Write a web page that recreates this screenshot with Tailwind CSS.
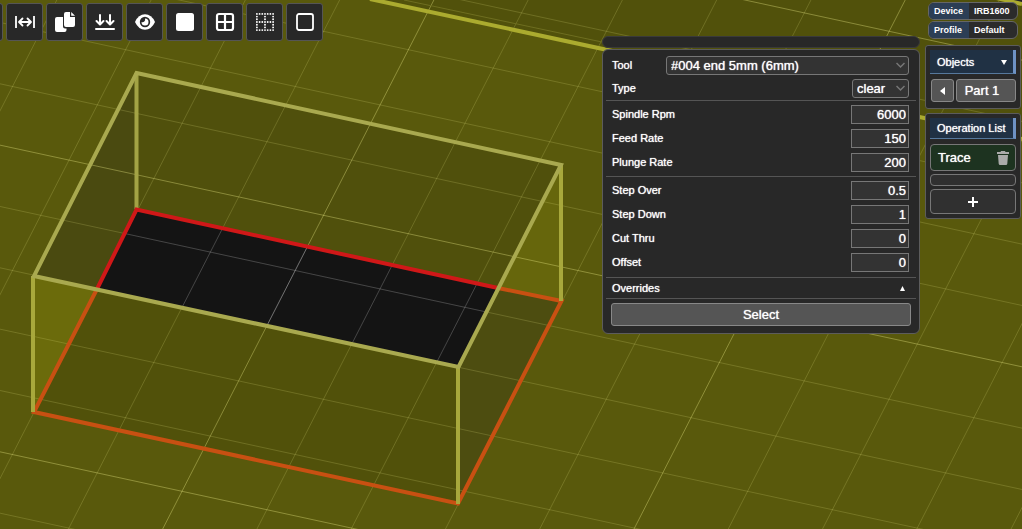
<!DOCTYPE html>
<html lang="en">
<head>
  <meta charset="UTF-8">
  <meta name="viewport" content="width=device-width, initial-scale=1.0">
  <title>Workspace</title>
  <script src="https://cdn.jsdelivr.net/npm/@tailwindcss/browser@4"></script>
</head>
<body class="bg-[#59590c] text-white font-['Liberation_Sans',Arial,sans-serif] text-[13px] overflow-hidden">
  <div class="relative min-h-screen overflow-hidden">

    <!-- 3D view -->
    <svg class="absolute inset-0 w-full h-full" viewBox="0 0 1022 529" preserveAspectRatio="xMinYMin slice" fill="none">
      <defs>
        <clipPath id="floor"><path d="M136.500 209.500 498 288 458.500 367 97 289Z" /></clipPath>
        <g id="grid"></g>
      </defs>
      <path d="M370 0H1022V140Z" fill="#51510b" />
      <path d="M998 -2H1022V3Z" fill="#222" />
      <path d="M136.500 73 561 165 498 288 136.500 209.500Z" fill="#50500c" />
      <path d="M136.500 73V209.500L97 289 34 276Z" fill="#4a4a10" />
      <path d="M561 165V301L498 288Z" fill="#66660c" />
      <path d="M34 276 97 289 34 412Z" fill="#6b6b0b" />
      <path d="M97 289 458.500 367V503.500L34 412Z" fill="#51510a" />
      <path d="M458.500 367 498 288 561 301 458.500 503.500Z" fill="#4d4d10" />
      <use href="#grid" stroke="#ffff98" />
      <path d="M136.500 209.500 498 288 458.500 367 97 289Z" fill="#151515" />
      <use href="#grid" stroke="#fff" clip-path="url(#floor)" />
      <use href="#grid" stroke="#fff" clip-path="url(#floor)" opacity=".3" />
      <path d="M404 0 602 42" stroke="#6e6e20" />
      <path d="M370 -1 1022 139M992 -3 1022 4" stroke="#abab2f" stroke-width="4" />
      <g stroke-width="4">
        <path d="M136.500 73V209" stroke="#a3a345" />
        <path d="M97 289 136.500 209.500 498 288" stroke="#d01818" />
        <path d="M97 289 34 412 458 503.500 561.500 301 498 288" stroke="#c85012" />
        <path d="M33 276V412M458 367V504M561 165V301" stroke="#a8a83c" />
        <path d="M136.500 73 561 165 458.500 367 34 276Z" stroke="#a9a94f" />
      </g>
    </svg>

    <div class="relative flex items-start">

      <!-- Toolbar -->
      <div class="flex gap-[3px] pt-[3px] -ml-[34px]">
        <button aria-label="Menu" class="w-[37px] h-[38px] rounded-[3px] border border-[#555] bg-[#282828]"></button>
        <button aria-label="Measure" class="flex items-center justify-center w-[37px] h-[38px] rounded-[3px] border border-[#555] bg-[#282828]">
          <svg class="size-5" viewBox="0 0 20 20" fill="none" stroke="#fff" stroke-width="1.800"><path d="M1 4v12M19 4v12" /><path d="M4.500 10h11M7.500 6.500 4 10l3.500 3.500M12.500 6.500 16 10l-3.500 3.500" stroke-linecap="round" stroke-linejoin="round" /></svg>
        </button>
        <button aria-label="Duplicate" class="flex items-center justify-center w-[37px] h-[38px] rounded-[3px] border border-[#555] bg-[#282828]">
          <svg class="size-5" viewBox="0 0 20 20" fill="#fff"><path d="M2 5h6v9.500q0 2 2 2h1.500V18q0 2-2 2H2q-2 0-2-2V7q0-2 2-2Z" /><path d="M11 0h4v5h5v8q0 2-2 2h-7q-2 0-2-2V2q0-2 2-2ZM16.200 0 20 3.800h-3.800Z" /></svg>
        </button>
        <button aria-label="Lay flat" class="flex items-center justify-center w-[37px] h-[38px] rounded-[3px] border border-[#555] bg-[#282828]">
          <svg class="size-5" viewBox="0 0 20 20" fill="none" stroke="#fff" stroke-width="2" stroke-linecap="round" stroke-linejoin="round"><path d="M1 17h18" /><path d="M5 3v9M1.500 9 5 12.500 8.500 9M15 3v9M11.500 9l3.500 3.500L18.500 9" /></svg>
        </button>
        <button aria-label="Visibility" class="flex items-center justify-center w-[37px] h-[38px] rounded-[3px] border border-[#555] bg-[#282828]">
          <svg class="size-5" viewBox="0 0 20 20"><path d="M0 10Q3.500 2.300 10 2.300T20 10Q16.500 17.700 10 17.700T0 10Z" fill="#fff" /><circle cx="10" cy="10" r="5.200" fill="#282828" /><path d="M10 6.500A3.500 3.500 0 1 1 6.500 10Q8 10.700 9.300 9.600T10 6.500Z" fill="#fff" /></svg>
        </button>
        <button aria-label="Solid" class="flex items-center justify-center w-[37px] h-[38px] rounded-[3px] border border-[#555] bg-[#282828]">
          <svg class="size-5" viewBox="0 0 20 20"><rect x="1" y="1" width="18" height="18" rx="2.500" fill="#fff" /></svg>
        </button>
        <button aria-label="Wireframe" class="flex items-center justify-center w-[37px] h-[38px] rounded-[3px] border border-[#555] bg-[#282828]">
          <svg class="size-5" viewBox="0 0 20 20" fill="none" stroke="#fff" stroke-width="2.200"><rect x="2" y="2" width="16" height="16" rx="2" /><path d="M10 2v16M2 10h16" /></svg>
        </button>
        <button aria-label="Transparent" class="flex items-center justify-center w-[37px] h-[38px] rounded-[3px] border border-[#555] bg-[#282828]">
          <svg class="size-5" viewBox="0 0 20 20" fill="none" stroke="#fff" stroke-width="1.900" stroke-linecap="round" stroke-dasharray="0 2.700"><path d="M1.900 1.900h16.300M1.900 10h16.300M1.900 18.100h16.300M1.900 1.900v16.300M10 1.900v16.300M18.100 1.900v16.300" /></svg>
        </button>
        <button aria-label="Outline" class="flex items-center justify-center w-[37px] h-[38px] rounded-[3px] border border-[#555] bg-[#282828]">
          <svg class="size-5" viewBox="0 0 20 20" fill="none" stroke="#fff" stroke-width="1.800"><rect x="2" y="2" width="16" height="16" rx="2" /></svg>
        </button>
      </div>

      <!-- Operation settings -->
      <form class="ml-auto mt-9 w-[318px] text-[11px] [text-shadow:0_0_1px_#fff] [&_button]:[text-shadow:0_0_1px_#fff] [&_input]:[text-shadow:0_0_1px_#fff] [&_select]:[text-shadow:0_0_1px_#fff]">
        <div class="h-3 rounded-md border border-[#3a3a3a] bg-[#282828]"></div>
        <div class="mt-[1px] rounded-md border border-[#5c5c5c] bg-[#282828] px-[3px] pt-[6px] pb-[7px]">
          <div class="flex flex-col gap-1 pl-[6px] pr-[7px] pb-[2px]">
            <div class="flex items-center justify-between">
              <label for="tool">Tool</label>
              <div class="relative w-[243px]">
                <select id="tool" class="block w-full h-[19px] appearance-none rounded-[3px] border border-[#777] bg-[#333] pl-1 text-[13px] leading-[17px]"><option>#004 end 5mm (6mm)</option></select>
                <svg class="absolute right-1 top-[6px] w-[9px] h-[7px] pointer-events-none" viewBox="0 0 9 7" fill="none" stroke="#777" stroke-width="1.500"><path d="m.5 1 4 4 4-4" /></svg>
              </div>
            </div>
            <div class="flex items-center justify-between">
              <label for="type">Type</label>
              <div class="relative w-[57px]">
                <select id="type" class="block w-full h-[19px] appearance-none rounded-[3px] border border-[#777] bg-[#333] pl-1 text-[13px] leading-[17px]"><option>clear</option></select>
                <svg class="absolute right-1 top-[6px] w-[9px] h-[7px] pointer-events-none" viewBox="0 0 9 7" fill="none" stroke="#777" stroke-width="1.500"><path d="m.5 1 4 4 4-4" /></svg>
              </div>
            </div>
          </div>
          <div class="flex flex-col gap-[5px] border-t border-[#555] pl-[6px] pr-[7px] py-1">
            <div class="flex items-center justify-between"><label for="rpm">Spindle Rpm</label><input id="rpm" value="6000" class="w-[58px] h-[19px] border border-[#777] bg-[#333] px-[2px] text-right text-[13px]"></div>
            <div class="flex items-center justify-between"><label for="feed">Feed Rate</label><input id="feed" value="150" class="w-[58px] h-[19px] border border-[#777] bg-[#333] px-[2px] text-right text-[13px]"></div>
            <div class="flex items-center justify-between"><label for="plunge">Plunge Rate</label><input id="plunge" value="200" class="w-[58px] h-[19px] border border-[#777] bg-[#333] px-[2px] text-right text-[13px]"></div>
          </div>
          <div class="flex flex-col gap-[5px] border-t border-[#555] pl-[6px] pr-[7px] pt-1 pb-[5px]">
            <div class="flex items-center justify-between"><label for="over">Step Over</label><input id="over" value="0.5" class="w-[58px] h-[19px] border border-[#777] bg-[#333] px-[2px] text-right text-[13px]"></div>
            <div class="flex items-center justify-between"><label for="down">Step Down</label><input id="down" value="1" class="w-[58px] h-[19px] border border-[#777] bg-[#333] px-[2px] text-right text-[13px]"></div>
            <div class="flex items-center justify-between"><label for="thru">Cut Thru</label><input id="thru" value="0" class="w-[58px] h-[19px] border border-[#777] bg-[#333] px-[2px] text-right text-[13px]"></div>
            <div class="flex items-center justify-between"><label for="offset">Offset</label><input id="offset" value="0" class="w-[58px] h-[19px] border border-[#777] bg-[#333] px-[2px] text-right text-[13px]"></div>
          </div>
          <button type="button" class="flex w-full h-[22px] items-center justify-between border-y border-[#555] pl-[6px] pr-[7px]">
            Overrides
            <svg class="mr-1 w-[5px] h-[5px]" viewBox="0 0 5 5" fill="#fff"><path d="M2.500 0 5 5H0Z" /></svg>
          </button>
          <button type="button" class="mt-1 mx-[5px] block w-[calc(100%-10px)] h-[23px] rounded-[3px] border border-[#888] bg-[#555] text-[13px] leading-[21px]">Select</button>
        </div>
      </form>

      <!-- Side column -->
      <div class="ml-[5px] mr-[1px] w-24 pt-[2px] text-[11px] [text-shadow:0_0_1px_#fff] [&_button]:[text-shadow:0_0_1px_#fff]">
        <div class="ml-[3px] mr-[3px] flex h-[18px] overflow-hidden rounded-md border border-[#666] bg-[#2b2b2b] text-[9px] font-bold leading-4 [text-shadow:none]">
          <span class="w-10 bg-[#2c3e55] pl-[5px]">Device</span><span class="pl-[5px]">IRB1600</span>
        </div>
        <div class="ml-[3px] mr-[3px] mt-[1px] flex h-[18px] overflow-hidden rounded-md border border-[#666] bg-[#2b2b2b] text-[9px] font-bold leading-4 [text-shadow:none]">
          <span class="w-10 bg-[#2c3e55] pl-[5px]">Profile</span><span class="pl-[5px]">Default</span>
        </div>

        <div class="mt-[6px] rounded-[3px] border border-[#5c5c5c] bg-[#282828] p-1 pb-[6px]">
          <button class="flex w-full h-6 items-center justify-between border-b border-r-3 border-b-[#56789c] border-r-[#6e92c4] bg-[#203144] pl-[7px] pr-[6px] pt-[1px]">
            Objects
            <svg class="w-[6px] h-[5px]" viewBox="0 0 6 5" fill="#fff"><path d="M0 0h6L3 5Z" /></svg>
          </button>
          <div class="mt-[5px] flex gap-[2px] text-[13px]">
            <button aria-label="Previous" class="ml-[1px] flex w-[23px] h-[23px] items-center justify-center rounded-[3px] border border-[#888] bg-[#555]">
              <svg class="w-[5px] h-[8px]" viewBox="0 0 5 8" fill="#fff"><path d="M5 0v8L0 4Z" /></svg>
            </button>
            <button class="flex-1 h-[23px] rounded-[3px] border border-[#888] bg-[#555] pr-2">Part 1</button>
          </div>
        </div>

        <div class="mt-1 rounded-[3px] border border-[#5c5c5c] bg-[#282828] p-1">
          <h2 class="h-[21px] border-b border-r-3 border-b-[#56789c] border-r-[#6e92c4] bg-[#203144] pl-[7px] leading-5 whitespace-nowrap">Operation List</h2>
          <button class="mt-[5px] flex w-full h-[27px] items-center justify-between rounded-[4px] border border-[#777] bg-[#1d3320] pl-[7px] pr-[6px] text-[13px]">
            Trace
            <svg class="w-3 h-[14px]" viewBox="0 0 12 14" fill="#aaa"><path d="M0 1h3.500L4 0h4l.5 1H12v2H0ZM1 4h10l-.7 8.700q-.1 1.300-1.400 1.300H3.100q-1.300 0-1.400-1.300Z" /></svg>
          </button>
          <div class="mt-[3px] h-3 rounded-[4px] border border-[#777] bg-[#303030]"></div>
          <button aria-label="Add operation" class="mt-[3px] flex w-full h-[25px] items-center justify-center rounded-[4px] border border-[#777] bg-[#303030]">
            <svg class="size-[10px]" viewBox="0 0 10 10" stroke="#fff" stroke-width="2"><path d="M5 0v10M0 5h10" /></svg>
          </button>
        </div>
      </div>
    </div>
  </div>

  <script>
    // Isometric bed grid, every fifth line is stronger
    const grid = document.getElementById("grid");
    const origin = [182, 491.3];
    const u = [84.83, 18.4];
    const v = [-28.3, 55.2];

    function addLine(from, dir, major) {
      const line = document.createElementNS("http://www.w3.org/2000/svg", "line");
      line.setAttribute("x1", from[0] - dir[0] * 20);
      line.setAttribute("y1", from[1] - dir[1] * 20);
      line.setAttribute("x2", from[0] + dir[0] * 20);
      line.setAttribute("y2", from[1] + dir[1] * 20);
      line.setAttribute("stroke-opacity", major ? 0.33 : 0.17);
      grid.appendChild(line);
    }

    for (let i = -15; i <= 15; i++) {
      addLine([origin[0] + v[0] * i, origin[1] + v[1] * i], u, i % 5 === 0);
      addLine([origin[0] + u[0] * i, origin[1] + u[1] * i], v, i % 5 === 0);
    }
  </script>
</body>
</html>
